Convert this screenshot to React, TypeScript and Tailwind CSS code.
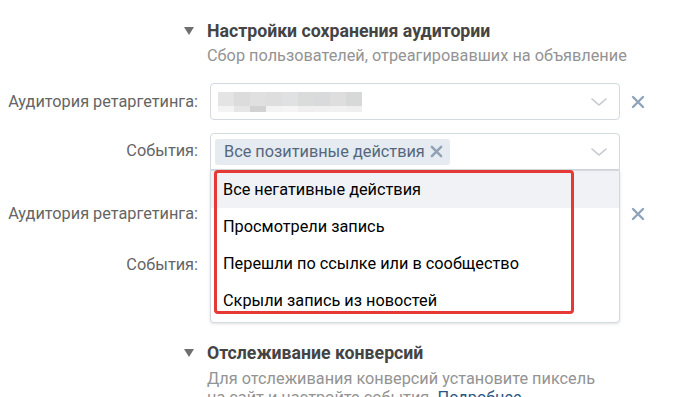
import React from "react";

const Chevron = () => (
  <svg width="18" height="10" viewBox="0 0 18 10" fill="none">
    <path d="M2 2l7 6 7-6" stroke="#c2c7cc" strokeWidth="1.6" strokeLinecap="round" strokeLinejoin="round" />
  </svg>
);

const Cross = ({ size = 14, color = "#8fa3bb", w = 2.4 }: { size?: number; color?: string; w?: number }) => (
  <svg width={size} height={size} viewBox="0 0 14 14" fill="none">
    <path d="M2 2l10 10M12 2L2 12" stroke={color} strokeWidth={w} strokeLinecap="round" />
  </svg>
);

const Triangle = () => (
  <svg width="10" height="8" viewBox="0 0 10 8">
    <path d="M0 0h10L5 8z" fill="#6f6f6f" />
  </svg>
);

const blurTop = ["#e4e4e4", "#dcdcdc", "#e0e0e0", "#dedede", "#dfe1e3", "#dadcdc", "#d9dadb", "#dedede", "#d7d8d8"];
const blurBot = ["#f3f3f3", "#e6e6e6", "#d2d2d2", "#f3f3f3", "#f5f5f5", "#efefef", "#f0f0f0", "#f1f1f1", "#efefef"];

const Blur = () => (
  <div className="flex flex-col">
    <div className="flex">
      {blurTop.map((c, i) => (
        <div key={i} className="w-[16px] h-[14px]" style={{ background: c }} />
      ))}
    </div>
    <div className="flex">
      {blurBot.map((c, i) => (
        <div key={i} className="w-[16px] h-[6px]" style={{ background: c }} />
      ))}
    </div>
  </div>
);

const Label = ({ children }: { children: React.ReactNode }) => (
  <div className="w-[198px] text-right text-[16.3px] text-[#656565] leading-[20px] whitespace-nowrap">{children}</div>
);

export default function App() {
  return (
    <div className="relative w-[697px] h-[397px] overflow-hidden bg-white font-['Roboto',sans-serif]">
      {/* Section 1 */}
      <div className="pt-[20px] flex items-center h-[42px]">
        <div className="w-[207px] pl-[184px] flex items-center">
          <Triangle />
        </div>
        <div className="text-[17.7px] font-bold text-[#444444] leading-[22px] whitespace-nowrap">
          Настройки сохранения аудитории
        </div>
      </div>
      <div className="pl-[207px] mt-[4px] text-[16.3px] text-[#939393] leading-[20px] whitespace-nowrap">
        Сбор пользователей, отреагировавших на объявление
      </div>

      {/* Row 1 */}
      <div className="mt-[17px] flex items-center">
        <Label>Аудитория ретаргетинга:</Label>
        <div className="ml-[12px] w-[410px] h-[37px] border border-[#d3d9de] rounded-[4px] flex items-center pl-[7px] pr-[11px]">
          <Blur />
          <div className="ml-auto flex items-center">
            <Chevron />
          </div>
        </div>
        <div className="ml-[11px] flex items-center">
          <Cross />
        </div>
      </div>

      {/* Row 2 */}
      <div className="mt-[13px] flex items-start">
        <div className="pt-[8px]">
          <Label>События:</Label>
        </div>
        <div className="ml-[12px] w-[410px] h-[37px] border border-[#d3d9de] rounded-t-[4px] flex items-center pl-[4px] pr-[11px]">
          <div className="h-[26px] pl-[9px] pr-[7px] rounded-[3px] bg-[#e5ebf1] flex items-center gap-[5px] text-[16.3px] text-[#55677d] leading-[20px] whitespace-nowrap">
            Все позитивные действия
            <Cross size={13} color="#8fa1b4" w={2.6} />
          </div>
          <div className="ml-auto flex items-center">
            <Chevron />
          </div>
        </div>
      </div>

      {/* Row 3 (under dropdown) */}
      <div className="mt-[25px] flex items-center h-[37px]">
        <Label>Аудитория ретаргетинга:</Label>
        <div className="ml-[12px] w-[410px] h-[37px] border border-[#d3d9de] rounded-[4px]" />
        <div className="ml-[11px] flex items-center">
          <Cross />
        </div>
      </div>

      {/* Row 4 (under dropdown) */}
      <div className="mt-[14px] flex items-center h-[37px]">
        <Label>События:</Label>
        <div className="ml-[12px] w-[410px] h-[37px] border border-[#d3d9de] rounded-[4px]" />
      </div>

      {/* Section 2 */}
      <div className="mt-[59px] flex items-center h-[22px]">
        <div className="w-[207px] pl-[184px] flex items-center">
          <Triangle />
        </div>
        <div className="text-[17.7px] font-bold text-[#444444] leading-[22px] whitespace-nowrap">
          Отслеживание конверсий
        </div>
      </div>
      <div className="pl-[207px] mt-[5px] text-[16.3px] text-[#939393] leading-[19px] whitespace-nowrap">
        Для отслеживания конверсий установите пиксель
        <br />
        на сайт и настройте события. <span className="text-[#2a5885]">Подробнее</span>
      </div>

      {/* Dropdown */}
      <div className="absolute left-[210px] top-[170px] w-[410px] bg-white border border-[#d3d9de] rounded-b-[4px] shadow-[0_1px_3px_rgba(0,0,0,0.12)] pb-[3px]">
        {[
          "Все негативные действия",
          "Просмотрели запись",
          "Перешли по ссылке или в сообщество",
          "Скрыли запись из новостей",
        ].map((t, i) => (
          <div
            key={t}
            className={`h-[37px] flex items-center pl-[12px] text-[16.3px] text-black leading-[20px] whitespace-nowrap ${i === 0 ? "bg-[#f0f2f5]" : ""}`}
          >
            {t}
          </div>
        ))}
      </div>
      <div className="absolute left-[214px] top-[170px] w-[360px] h-[144px] border-[3px] border-[#e53935] rounded-[4px]" />
    </div>
  );
}
